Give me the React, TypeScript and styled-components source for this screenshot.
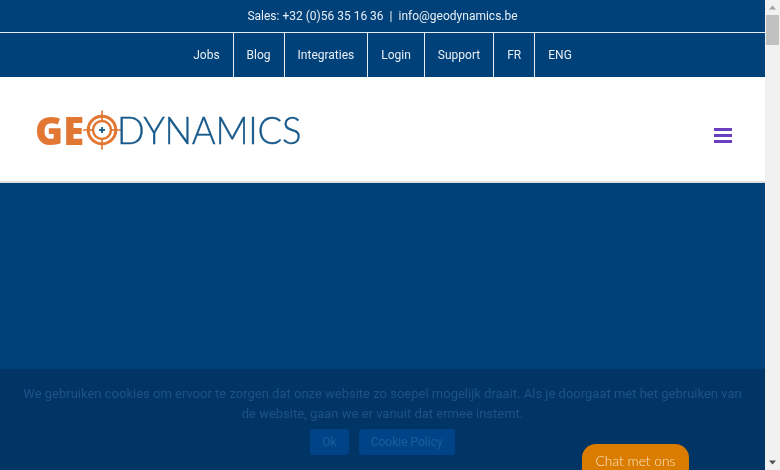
import React from "react";
import styled, { createGlobalStyle } from "styled-components";

const GlobalStyle = createGlobalStyle`
    html, body {
        margin: 0;
        padding: 0;
        height: 100%;
        overflow: hidden;
        background: #00417a;
    }
    * {
        box-sizing: border-box;
    }
`;

const Page = styled.div`
    position: relative;
    display: flex;
    width: 780px;
    height: 470px;
    overflow: hidden;
    font-family: Roboto, "Liberation Sans", sans-serif;
    will-change: transform;
`;

const Main = styled.div`
    position: relative;
    display: flex;
    flex-direction: column;
    width: 765px;
    height: 470px;
    overflow: hidden;
`;

const TopBar = styled.div`
    height: 33px;
    background: #00417a;
    border-bottom: 1px solid #e6ebf1;
    color: #e8eef4;
    font-size: 12px;
    line-height: 32px;
    text-align: center;
    padding-bottom: 1px;
`;

const Divider = styled.span`
    margin: 0 6px;
`;

const Nav = styled.nav`
    display: flex;
    justify-content: center;
    height: 44px;
    background: #00417a;
`;

const NavItem = styled.a<{ $last?: boolean }>`
    display: flex;
    align-items: center;
    padding: 0 13px;
    color: #e8eef4;
    font-size: 12px;
    border-right: ${props => (props.$last ? "none" : "1px solid #e6ebf1")};
`;

const Header = styled.header`
    display: flex;
    justify-content: space-between;
    align-items: center;
    height: 106px;
    background: #fff;
    border-bottom: 2px solid #dedede;
    padding: 0 33px 0 35px;
`;

const Logo = styled.div`
    display: flex;
    align-items: center;
    height: 44px;
    margin-top: 2px;
`;

const LogoBold = styled.span`
    display: block;
    width: 47px;
    font-family: "Open Sans", sans-serif;
    font-weight: 800;
    font-size: 38px;
    line-height: 44px;
    letter-spacing: 0;
    color: #e27733;
`;

const LogoLight = styled.span`
    font-family: Lato, sans-serif;
    font-weight: 300;
    font-size: 36.5px;
    line-height: 44px;
    letter-spacing: -0.3px;
    color: #17598a;
    -webkit-text-stroke: 0.35px #17598a;
`;

const Target = styled.svg`
    width: 40px;
    height: 40px;
    margin: 0 -5px 0 0;
    flex: none;
`;

const Burger = styled.button`
    display: flex;
    flex-direction: column;
    gap: 3px;
    width: 18px;
    padding: 0;
    margin-top: 13px;
    border: 0;
    background: none;
`;

const BurgerBar = styled.span`
    display: block;
    height: 3px;
    background: #6a3fc0;
`;

const Hero = styled.section`
    flex: 1;
    background: #00417a;
`;

const CookieBar = styled.div`
    position: absolute;
    left: 0;
    right: 0;
    top: 369px;
    bottom: 0;
    padding: 15px 20px 0;
    background: #003565;
    text-align: center;
`;

const CookieText = styled.p`
    margin: 0;
    color: #1f5388;
    font-size: 13px;
    line-height: 20px;
`;

const CookieButtons = styled.div`
    display: flex;
    justify-content: center;
    gap: 10px;
    margin-top: 5px;
`;

const CookieButton = styled.a`
    height: 26px;
    padding: 0 12px;
    border-radius: 3px;
    background: #004487;
    color: #1d5c9a;
    font-size: 12px;
    line-height: 26px;
`;

const ChatButton = styled.div`
    position: absolute;
    left: 582px;
    top: 444px;
    width: 107px;
    height: 30px;
    border-radius: 14px 14px 0 0;
    background: #d97c00;
    color: #fbe6c8;
    font-family: Lato, sans-serif;
    font-weight: 300;
    font-size: 13.8px;
    line-height: 34px;
    text-align: center;
`;

const Scrollbar = styled.div`
    display: flex;
    flex-direction: column;
    align-items: center;
    width: 15px;
    height: 470px;
    background: #f1f1f1;
`;

const ArrowBox = styled.svg`
    width: 15px;
    height: 15px;
    flex: none;
`;

const Thumb = styled.div`
    width: 13px;
    height: 30px;
    background: #c1c1c1;
`;

const Spacer = styled.div`
    flex: 1;
`;

function Crosshair() {
    return (
        <Target viewBox="0 0 40 40">
            <line x1="20" y1="0.5" x2="20" y2="39.5" stroke="#e27733" strokeWidth="1.7" />
            <line x1="1" y1="20" x2="40" y2="20" stroke="#e27733" strokeWidth="1.7" />
            <circle cx="20" cy="20" r="13.8" fill="#fff" stroke="#e27733" strokeWidth="3" />
            <circle cx="20" cy="20" r="9" fill="#fff" stroke="#e27733" strokeWidth="2.4" />
            <line x1="20" y1="5" x2="20" y2="12" stroke="#e27733" strokeWidth="1.7" />
            <line x1="20" y1="28" x2="20" y2="35" stroke="#e27733" strokeWidth="1.7" />
            <line x1="5" y1="20" x2="12" y2="20" stroke="#e27733" strokeWidth="1.7" />
            <line x1="28" y1="20" x2="35" y2="20" stroke="#e27733" strokeWidth="1.7" />
            <line x1="20" y1="17" x2="20" y2="23" stroke="#17598a" strokeWidth="1.8" />
            <line x1="17" y1="20" x2="23" y2="20" stroke="#17598a" strokeWidth="1.8" />
        </Target>
    );
}

const navItems = ["Jobs", "Blog", "Integraties", "Login", "Support", "FR", "ENG"];

function App() {
    return (
        <Page>
            <GlobalStyle />
            <Main>
                <TopBar>
                    Sales: +32 (0)56 35 16 36<Divider>|</Divider>info@geodynamics.be
                </TopBar>
                <Nav>
                    {navItems.map((item, i) => (
                        <NavItem key={item} $last={i === navItems.length - 1}>{item}</NavItem>
                    ))}
                </Nav>
                <Header>
                    <Logo>
                        <LogoBold>GE</LogoBold>
                        <Crosshair />
                        <LogoLight>DYNAMICS</LogoLight>
                    </Logo>
                    <Burger aria-label="Menu">
                        <BurgerBar />
                        <BurgerBar />
                        <BurgerBar />
                    </Burger>
                </Header>
                <Hero />
                <CookieBar>
                    <CookieText>
                        We gebruiken cookies om ervoor te zorgen dat onze website zo soepel mogelijk draait. Als je doorgaat met het gebruiken van de website, gaan we er vanuit dat ermee instemt.
                    </CookieText>
                    <CookieButtons>
                        <CookieButton>Ok</CookieButton>
                        <CookieButton>Cookie Policy</CookieButton>
                    </CookieButtons>
                </CookieBar>
                <ChatButton>Chat met ons</ChatButton>
            </Main>
            <Scrollbar>
                <ArrowBox viewBox="0 0 15 15">
                    <path d="M4 9.5 L7.5 5.5 L11 9.5 Z" fill="#a3a3a3" />
                </ArrowBox>
                <Thumb />
                <Spacer />
                <ArrowBox viewBox="0 0 15 15">
                    <path d="M4 5.5 L7.5 9.5 L11 5.5 Z" fill="#505050" />
                </ArrowBox>
            </Scrollbar>
        </Page>
    );
}

export default App;
